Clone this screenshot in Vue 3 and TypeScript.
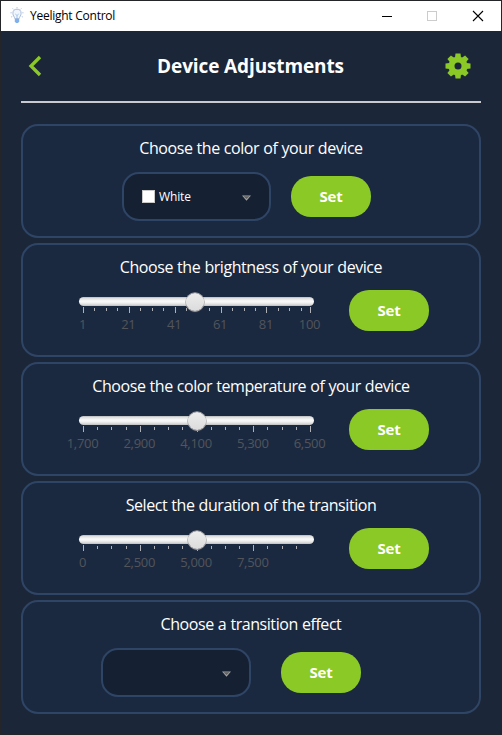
<script setup lang="ts">
import { ref } from 'vue'

interface Tick {
  pos: number
  major: boolean
  label?: string
}

interface SliderCard {
  title: string
  min: number
  max: number
  value: number
  ticks: Tick[]
}

function buildTicks(min: number, max: number, major: number, closeEnd: boolean): Tick[] {
  const ticks: Tick[] = []
  const minor = major / 4
  const count = Math.ceil((max - min) / minor)
  for (let i = 0; i < count; i++) {
    const value = min + i * minor
    const isMajor = i % 4 === 0
    ticks.push({
      pos: ((value - min) / (max - min)) * 100,
      major: isMajor,
      label: isMajor ? value.toLocaleString('en-US') : undefined,
    })
  }
  if (closeEnd) ticks.push({ pos: 100, major: true, label: max.toLocaleString('en-US') })
  return ticks
}

const sliders = ref<SliderCard[]>([
  { title: 'Choose the brightness of your device', min: 1, max: 100, value: 50, ticks: buildTicks(1, 100, 20, true) },
  { title: 'Choose the color temperature of your device', min: 1700, max: 6500, value: 4100, ticks: buildTicks(1700, 6500, 1200, true) },
  { title: 'Select the duration of the transition', min: 0, max: 10000, value: 5000, ticks: buildTicks(0, 10000, 2500, false) },
])

const thumbPos = (s: SliderCard) => ((s.value - s.min) / (s.max - s.min)) * 100
</script>

<template>
  <div class="window">
    <header class="titlebar">
      <svg class="bulb" width="14" height="18" viewBox="0 0 14 18" fill="none">
        <path d="M4.7 11.5C4.5 9.6 2.900 8.700 2.900 6.300a4.100 4.100 0 0 1 8.200 0c0 2.400-1.600 3.300-1.800 5.200z" fill="#f1f6fd" stroke="#a9bddc" />
        <path d="M5.300 7l1.700 1.500L8.700 7M7 8.500V12" stroke="#8db8ee" stroke-width=".8" />
        <path d="M4.800 12h4.400v2.500L8 16H6l-1.200-1.500z" fill="#7fb0ee" />
        <path d="M7 .2v1M2.700 1.500l.7.8M11.300 1.500l-.7.8M.5 5.800h1.200M12.300 5.800h1.200M1.200 10l1-.5M12.800 10l-1-.5" stroke="#a9bddc" />
      </svg>
      <span class="app-name">Yeelight Control</span>
      <svg class="controls" width="102" height="12" viewBox="0 0 102 12" fill="none" shape-rendering="crispEdges">
        <path d="M0 6.500h10" stroke="#000" />
        <rect x="45.500" y="1.500" width="9" height="9" stroke="#ccc" />
        <path d="M91 1l10 10M101 1L91 11" stroke="#000" stroke-width="1.100" shape-rendering="auto" />
      </svg>
    </header>

    <main class="content">
      <div class="heading">
        <svg class="back" width="14" height="22" viewBox="0 0 14 22">
          <path d="M12 2L3 11l9 9" fill="none" stroke="#8bc926" stroke-width="3.300" />
        </svg>
        <h1>Device Adjustments</h1>
        <svg class="gear" width="26" height="26" viewBox="-13 -13 26 26">
          <g fill="#8bc926">
            <circle r="9.600" />
            <path
              v-for="angle in [0, 45, 90, 135, 180, 225, 270, 315]"
              :key="angle"
              :transform="`rotate(${angle})`"
              d="M-3-8.500L-2.500-12.500h5L3-8.500z"
            />
          </g>
          <circle r="3.500" fill="#1c2639" />
        </svg>
      </div>

      <section class="card combo-card">
        <h2>Choose the color of your device</h2>
        <div class="row">
          <div class="combo">
            <span class="swatch"></span>
            <span class="combo-text">White</span>
            <svg class="arrow" width="9" height="6" viewBox="0 0 9 6">
              <path d="M0 .5h9L4.500 5.700z" fill="#a4a4a4" /><path d="M1.500 1.200h6L4.500 4z" fill="#606060" />
            </svg>
          </div>
          <button class="set">Set</button>
        </div>
      </section>

      <section v-for="s in sliders" :key="s.title" class="card slider-card">
        <h2>{{ s.title }}</h2>
        <div class="row">
          <div class="slider">
            <div class="track"></div>
            <div class="scale">
              <span
                v-for="t in s.ticks"
                :key="t.pos"
                class="tick"
                :class="{ major: t.major }"
                :style="{ left: t.pos + '%' }"
              ><i v-if="t.label">{{ t.label }}</i></span>
              <span class="thumb" :style="{ left: thumbPos(s) + '%' }"></span>
            </div>
          </div>
          <button class="set">Set</button>
        </div>
      </section>

      <section class="card combo-card">
        <h2>Choose a transition effect</h2>
        <div class="row effect-row">
          <div class="combo effect">
            <svg class="arrow" width="9" height="6" viewBox="0 0 9 6">
              <path d="M0 .5h9L4.500 5.700z" fill="#a4a4a4" /><path d="M1.500 1.200h6L4.500 4z" fill="#606060" />
            </svg>
          </div>
          <button class="set">Set</button>
        </div>
      </section>
    </main>
  </div>
</template>

<style>
body {
  margin: 0;
  background: #1c2639;
}
</style>

<style scoped>
* {
  box-sizing: border-box;
}
.window {
  width: 502px;
  height: 735px;
  border: 1px solid #232529;
  background: #1c2639;
  font-family: 'Open Sans', 'Noto Sans', sans-serif;
  color: #fff;
  overflow: hidden;
}
.titlebar {
  display: flex;
  align-items: center;
  height: 30px;
  background: #fff;
  padding: 0 17px 0 9px;
}
.app-name {
  margin-left: 6px;
  color: #000;
  font-size: 12px;
  line-height: 16px;
  letter-spacing: -0.25px;
  white-space: nowrap;
}
.bulb {
  flex: none;
}
.controls {
  margin-left: auto;
  margin-top: -1px;
}
.content {
  padding: 0 20px;
}
.heading {
  display: flex;
  align-items: center;
  justify-content: space-between;
  height: 72px;
  padding: 0 10px 0 7px;
  border-bottom: 2px solid #c8cacf;
  margin-bottom: 21px;
}
h1 {
  margin: 0;
  font-size: 19px;
  line-height: 24px;
  font-weight: 700;
  letter-spacing: -0.12px;
  white-space: nowrap;
  transform: translateX(7px);
}
.card {
  height: 114px;
  border: 2px solid #2f4565;
  border-radius: 17px;
  background: #1b2940;
  margin-bottom: 5px;
}
h2 {
  margin: 11px 0 0;
  font-size: 16px;
  line-height: 22px;
  font-weight: 400;
  text-align: center;
  white-space: nowrap;
  letter-spacing: -0.44px;
  word-spacing: 0.4px;
}
.row {
  display: flex;
}
.combo-card .row {
  align-items: center;
  padding-left: 99px;
  gap: 20px;
  margin-top: 13px;
}
.combo-card .effect-row {
  padding-left: 78px;
  gap: 30px;
}
.combo {
  display: flex;
  align-items: center;
  width: 149px;
  height: 49px;
  padding: 0 18px;
  border: 2px solid #2f4565;
  border-radius: 17px;
  background: #152033;
}
.combo.effect {
  width: 150px;
}
.swatch {
  width: 13px;
  height: 13px;
  border: 1px solid #c9c9c9;
  background: #fff;
}
.combo-text {
  margin-left: 4px;
  font-size: 12px;
  line-height: 16px;
  letter-spacing: -0.15px;
}
.arrow {
  margin-left: auto;
  margin-top: 2px;
}
.set {
  width: 80px;
  height: 41px;
  padding: 0 0 2px;
  border: 0;
  border-radius: 20px;
  background: #8bc926;
  color: #fff;
  font: 700 15px/20px 'Open Sans', 'Noto Sans', sans-serif;
  letter-spacing: -0.2px;
}
.slider-card .row {
  padding-left: 56px;
  gap: 35px;
  margin-top: 12px;
}
.slider {
  width: 235px;
  padding-top: 7px;
}
.track {
  height: 9px;
  border-radius: 5px;
  background: linear-gradient(#b4b6b9 0, #dedede 14%, #fafafa 45%, #f1f1f1 65%, #d4d4d4 88%, #b9bbbd 100%);
}
.scale {
  position: relative;
  height: 30px;
  margin: 1px 4px 0;
}
.tick {
  position: absolute;
  top: 1px;
  width: 1px;
  height: 3px;
  background: #aeb2b8;
}
.tick.major {
  top: 0;
  height: 6px;
}
.tick i {
  position: absolute;
  top: 8px;
  left: -0.5px;
  transform: translateX(-50%);
  font-style: normal;
  font-size: 13px;
  line-height: 18px;
  letter-spacing: -0.3px;
  color: #52555b;
}
.thumb {
  position: absolute;
  top: -14.5px;
  width: 18px;
  height: 18px;
  margin-left: -9px;
  border-radius: 50%;
  background: linear-gradient(#ececec, #dcdcdc);
  box-shadow: 0 0 0 0.700px #a5a5a5, 0 1px 1px #78797c;
}
</style>
